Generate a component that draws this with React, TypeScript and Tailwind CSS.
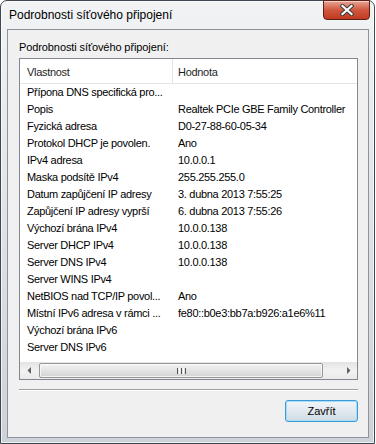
import React from "react";

const rows: [string, string][] = [
  ["Přípona DNS specifická pro...", ""],
  ["Popis", "Realtek PCIe GBE Family Controller"],
  ["Fyzická adresa", "D0-27-88-60-05-34"],
  ["Protokol DHCP je povolen.", "Ano"],
  ["IPv4 adresa", "10.0.0.1"],
  ["Maska podsítě IPv4", "255.255.255.0"],
  ["Datum zapůjčení IP adresy", "3. dubna 2013 7:55:25"],
  ["Zapůjčení IP adresy vyprší", "6. dubna 2013 7:55:26"],
  ["Výchozí brána IPv4", "10.0.0.138"],
  ["Server DHCP IPv4", "10.0.0.138"],
  ["Server DNS IPv4", "10.0.0.138"],
  ["Server WINS IPv4", ""],
  ["NetBIOS nad TCP/IP povol...", "Ano"],
  ["Místní IPv6 adresa v rámci ...", "fe80::b0e3:bb7a:b926:a1e6%11"],
  ["Výchozí brána IPv6", ""],
  ["Server DNS IPv6", ""],
];

function CloseButton() {
  return (
    <div className="mt-[-1px] flex h-[20px] w-[47px] items-center justify-center rounded-b-[4px] border border-[#5b2016] bg-gradient-to-b from-[#e7a496] via-[#d0563d] to-[#c03a21] shadow-[inset_0_1px_0_rgba(255,255,255,0.5)]">
      <svg width="14" height="12" viewBox="0 0 14 12">
        <path d="M2.5 2 L11.5 10 M11.5 2 L2.5 10" stroke="#3b3b3b" strokeWidth="4.2" strokeLinecap="square" />
        <path d="M2.5 2 L11.5 10 M11.5 2 L2.5 10" stroke="#ffffff" strokeWidth="2.2" strokeLinecap="square" />
      </svg>
    </div>
  );
}

function Arrow({ dir }: { dir: "left" | "right" }) {
  return (
    <div className="flex h-full w-[17px] items-center justify-center">
      <svg width="4" height="7" viewBox="0 0 4 7">
        {dir === "left" ? (
          <path d="M4 0 L0.5 3.5 L4 7 Z" fill="#606060" />
        ) : (
          <path d="M0 0 L3.5 3.5 L0 7 Z" fill="#606060" />
        )}
      </svg>
    </div>
  );
}

function ScrollBar() {
  return (
    <div className="mt-auto flex h-[17px] bg-gradient-to-b from-[#e3e3e3] via-[#f2f2f2] to-[#eaeaea]">
      <Arrow dir="left" />
      <div className="flex flex-1 items-center pl-[2px] pr-[17px]">
        <div className="flex h-[15px] w-[284px] items-center justify-center gap-[1px] rounded-[2px] border border-[#979797] bg-gradient-to-b from-[#f3f3f3] via-[#e4e4e4] to-[#d2d2d2] shadow-[inset_0_0_0_1px_rgba(255,255,255,0.7)]">
          <span className="h-[6px] w-[1px] bg-[#555]" />
          <span className="h-[6px] w-[1px] bg-white" />
          <span className="h-[6px] w-[1px] bg-[#555]" />
          <span className="h-[6px] w-[1px] bg-white" />
          <span className="h-[6px] w-[1px] bg-[#555]" />
        </div>
      </div>
      <Arrow dir="right" />
    </div>
  );
}

export default function App() {
  return (
    <div
      className="h-[444px] w-[376px] bg-white text-black"
      style={{ fontFamily: '"Liberation Sans", Arial, sans-serif' }}
    >
      <div className="flex h-[444px] w-[375px] flex-col rounded-t-[7px] border border-[#3f4750] bg-gradient-to-b from-[#f1f3f5] via-[#dfe3e7] to-[#cdd2d8] shadow-[inset_0_0_0_1px_rgba(255,255,255,0.65)]">
        {/* title bar */}
        <div className="flex h-[28px] items-start justify-between pl-[8px] pr-[4px]">
          <span className="pt-[7px] text-[12px] leading-[15px]">Podrobnosti síťového připojení</span>
          <CloseButton />
        </div>

        {/* client area */}
        <div className="ml-[6px] mr-[5px] flex h-[409px] flex-col border border-[#8b939c] bg-[#f0f0f0] pl-[11px] pr-[10px] pt-[11px]">
          <div className="text-[11px] leading-[13px] tracking-[-0.1px]">Podrobnosti síťového připojení:</div>

          <div className="mt-[4px] flex h-[322px] flex-col border border-[#828790] bg-white text-[11px] tracking-[-0.3px]">
            <div className="flex h-[25px] border-b border-[#e5e5e5]">
              <div className="flex w-[152px] items-center pl-[7px] pt-[2px] text-[#1e1e1e]">Vlastnost</div>
              <div className="w-[1px] bg-[#e3e3e3]" />
              <div className="flex items-center pl-[5px] pt-[2px] text-[#1e1e1e]">Hodnota</div>
            </div>
            <div className="flex flex-col">
              {rows.map(([name, value], i) => (
                <div key={i} className="flex h-[17px] items-center whitespace-nowrap leading-[13px]">
                  <div className="w-[153px] pl-[7px]">{name}</div>
                  <div className="pl-[5px]">{value}</div>
                </div>
              ))}
            </div>
            <ScrollBar />
          </div>

          <div className="mt-[9px] h-[1px] w-full bg-[#a0a0a0]" />
          <div className="h-[1px] w-full bg-white" />

          <div className="mt-[9px] flex justify-end">
            <button className="flex h-[22px] w-[73px] items-center justify-center rounded-[3px] border border-[#3c9ad6] bg-gradient-to-b from-[#f0f5f8] via-[#e2eaf0] to-[#cfdbe4] text-[11px] shadow-[inset_0_0_0_1px_#a8dcf7]">
              Zavřít
            </button>
          </div>
        </div>
      </div>
    </div>
  );
}
